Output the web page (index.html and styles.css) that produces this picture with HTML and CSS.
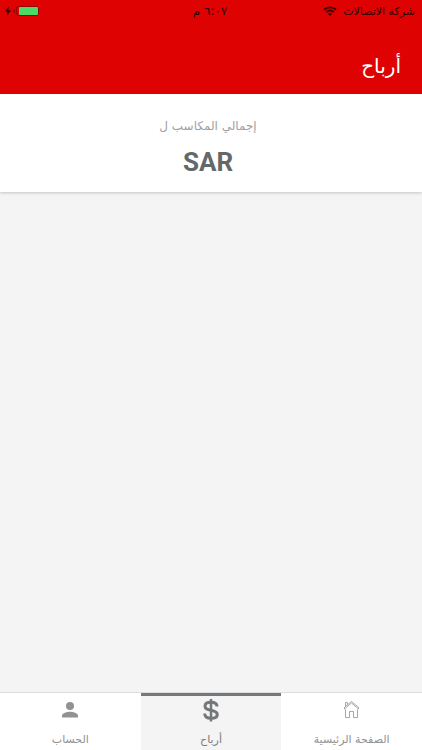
FILE: index.html
```html
<!DOCTYPE html>
<html lang="ar" dir="rtl">
<head>
<meta charset="utf-8">
<meta name="viewport" content="width=device-width, initial-scale=1">
<title>أرباح</title>
<link rel="stylesheet" href="styles.css">
</head>
<body>
<header class="top">
  <div class="status">
    <div class="carrier">
      <span>شركة الاتصالات</span>
      <svg class="wifi" viewBox="0 0 14 10" aria-hidden="true">
        <path d="M1 3.8a8.6 8.6 0 0 1 12 0M3.2 6.1a5.4 5.4 0 0 1 7.6 0" fill="none" stroke="currentColor" stroke-width="1.9"/>
        <path d="M4.9 7.8a3 3 0 0 1 4.2 0L7 10z" fill="currentColor"/>
      </svg>
    </div>
    <time class="clock">٦:٠٧ م</time>
    <div class="power">
      <svg class="battery" viewBox="0 0 27 12" aria-hidden="true">
        <path d="M2 4a2 2 0 0 0 0 4z" fill="#8c0806"/>
        <rect x="3.5" y="1.5" width="22" height="9" rx="2" fill="none" stroke="#8c0806"/>
        <rect x="6" y="2" width="19" height="8" rx="1" fill="#4cd964"/>
      </svg>
      <svg class="bolt" viewBox="0 0 6 10" aria-hidden="true">
        <path d="M3.9 0 0 5.6h2.5L1.8 10 6 4.2H3.4z" fill="currentColor"/>
      </svg>
    </div>
  </div>
  <h1 class="title">أرباح</h1>
</header>
<main class="content">
  <section class="summary">
    <p class="summary-label">إجمالي المكاسب ل</p>
    <p class="summary-value">SAR</p>
  </section>
</main>
<nav class="tabs">
  <a class="tab" href="#home">
    <svg class="icon" viewBox="0 0 24 24" fill="none" stroke="currentColor" stroke-width="0.8" aria-hidden="true">
      <path d="M5.500 11.500v8h4v-6h4v6h4v-8"/>
      <path d="M4.500 11 11.500 5l7 6v-1.700L11.500 3.500l-7 5.800z"/>
      <path d="M5.500 8.500v-4h2v2.300"/>
    </svg>
    <span>الصفحة الرئيسية</span>
  </a>
  <a class="tab active" href="#earnings" aria-current="page">
    <svg class="icon" viewBox="0 0 24 24" fill="none" stroke="currentColor" aria-hidden="true">
      <path d="M18 8.500C18 5.800 15.500 4.300 12 4.300S6 5.800 6 8.200c0 2.700 2.700 3.300 6 4 3.600.7 6.300 1.400 6.300 4.200 0 2.600-2.600 3.900-6.100 3.900-3.900 0-6.500-1.500-6.500-4.800" stroke-width="3"/>
      <path d="M12 1v22.500" stroke-width="2.500"/>
    </svg>
    <span>أرباح</span>
  </a>
  <a class="tab" href="#account">
    <svg class="icon" viewBox="0 0 24 24" fill="currentColor" aria-hidden="true">
      <circle cx="12" cy="8" r="4"/>
      <path d="M4 19.500v-1.800C4 15 9.300 13.700 12 13.700s8 1.300 8 4v1.800z"/>
    </svg>
    <span>الحساب</span>
  </a>
</nav>
</body>
</html>
```
FILE: styles.css
```css
* {
  box-sizing: border-box;
}

body {
  margin: 0;
  min-height: 100vh;
  display: flex;
  flex-direction: column;
  background: #f4f4f4;
  font-family: Roboto, "DejaVu Sans", sans-serif;
}

.top {
  position: relative;
  z-index: 1;
  background: #df0202;
}

.status {
  display: grid;
  grid-template-columns: 1fr auto 1fr;
  align-items: center;
  height: 22px;
  padding: 0 7px 0 5px;
  color: #350404;
  font-family: "DejaVu Sans", sans-serif;
  font-size: 11px;
}

.clock {
  font-size: 12px;
}

.carrier,
.power {
  display: flex;
  align-items: center;
  gap: 6px;
}

.power {
  justify-content: flex-end;
  gap: 2px;
}

.wifi {
  width: 14px;
  height: 10px;
}

.battery {
  width: 27px;
  height: 12px;
}

.bolt {
  width: 6px;
  height: 10px;
}

.title {
  margin: 0;
  padding: 26px 21px 10px;
  color: #fff;
  font-family: "DejaVu Sans", sans-serif;
  font-size: 20px;
  font-weight: 400;
  line-height: 36px;
}

.content {
  flex: 1;
}

.summary {
  padding: 20px 22px 10px 16px;
  background: #fff;
  box-shadow: 0 1px 3px rgba(0, 0, 0, 0.2);
  text-align: center;
}

.summary-label,
.summary-value {
  margin: 0;
}

.summary-label {
  color: #a0a0a0;
  font-family: "DejaVu Sans", sans-serif;
  font-size: 12px;
  line-height: 24px;
}

.summary-value {
  padding-top: 4px;
  color: #63686a;
  font-size: 26px;
  font-weight: 700;
  line-height: 40px;
}

.tabs {
  display: grid;
  grid-template-columns: repeat(3, 1fr);
  height: 58px;
  border-top: 1px solid #dcdcdc;
  background: #fff;
}

.tab {
  display: flex;
  flex-direction: column;
  align-items: center;
  gap: 10px;
  padding-top: 5px;
  color: #929292;
  font-family: "DejaVu Sans", sans-serif;
  font-size: 11px;
  line-height: 16px;
  text-decoration: none;
}

.tab.active {
  background: #f4f4f4;
  box-shadow: inset 0 3px #74787a;
  color: #74787a;
}

.icon {
  width: 24px;
  height: 24px;
}
```
